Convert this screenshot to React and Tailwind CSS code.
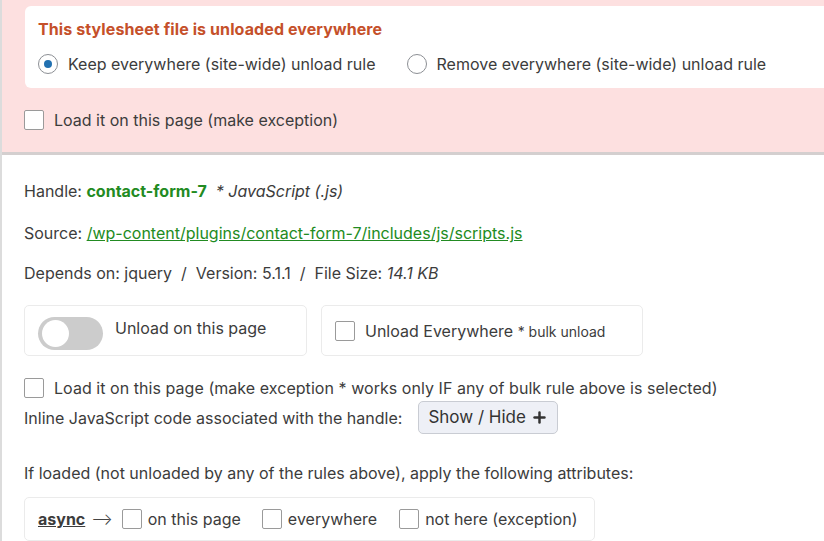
import { Plus } from 'lucide-react';

function Checkbox({ className = '' }) {
  return <span className={`inline-block w-[20px] h-[20px] border border-[#9a9a9a] bg-white rounded-[2px] shrink-0 ${className}`} />;
}

function Radio({ checked }) {
  return (
    <span className="inline-flex items-center justify-center w-[20px] h-[20px] rounded-full border border-[#8c8f94] bg-white shrink-0">
      {checked && <span className="w-[8px] h-[8px] rounded-full bg-[#2271b1]" />}
    </span>
  );
}

export default function App() {
  return (
    <div className="w-[824px] h-[541px] overflow-hidden bg-white text-[#3c3c3c] text-[16px] border-l-[2px] border-[#dcdcdc]" style={{ fontFamily: 'Inter, "Liberation Sans", Arial, sans-serif' }}>
      {/* Unloaded everywhere notice */}
      <div className="bg-[#fde0e0] pt-[6px] pb-[20px] border-b-[3px] border-[#d4cfcf]">
        <div className="ml-[23px] bg-white rounded-l-[6px] pl-[13px] pt-[11px] pb-[12px]">
          <div className="text-[#c5502a] font-bold text-[16px] leading-[24px] tracking-[0.1px]">This stylesheet file is unloaded everywhere</div>
          <div className="flex items-center mt-[11px] leading-[24px]">
            <label className="flex items-center gap-[10px]">
              <Radio checked />
              <span>Keep everywhere (site-wide) unload rule</span>
            </label>
            <label className="flex items-center gap-[10px] ml-[31px]">
              <Radio />
              <span>Remove everywhere (site-wide) unload rule</span>
            </label>
          </div>
        </div>
        <label className="flex items-center gap-[10px] ml-[22px] mt-[20px] leading-[24px]">
          <Checkbox />
          <span>Load it on this page (make exception)</span>
        </label>
      </div>

      {/* Handle details */}
      <div className="pl-[22px] pt-[24px]">
        <div className="leading-[24px]">
          Handle: <b className="text-[#228b22] font-bold">contact-form-7</b>&nbsp; <i>* JavaScript (.js)</i>
        </div>
        <div className="leading-[24px] mt-[18px]">
          Source: <a className="text-[#228b22] underline">/wp-content/plugins/contact-form-7/includes/js/scripts.js</a>
        </div>
        <div className="leading-[24px] mt-[16px]">
          Depends on: jquery &nbsp;/&nbsp; Version: 5.1.1 &nbsp;/&nbsp; File Size: <i>14.1 KB</i>
        </div>

        <div className="flex gap-[14px] mt-[20px]">
          <div className="w-[283px] h-[51px] border border-[#ebebeb] rounded-[5px] flex items-start pl-[13px] pt-[11px] gap-[12px]">
            <span className="w-[65px] h-[33px] rounded-full bg-[#cccccc] flex items-center pl-[4px] shrink-0">
              <span className="w-[27px] h-[27px] rounded-full bg-white" />
            </span>
            <span className="leading-[24px] -mt-[1px]">Unload on this page</span>
          </div>
          <div className="w-[322px] h-[51px] border border-[#ebebeb] rounded-[5px] flex items-center pl-[13px] gap-[10px]">
            <Checkbox />
            <span>Unload Everywhere <span className="text-[14px]">* bulk unload</span></span>
          </div>
        </div>

        <label className="flex items-center gap-[10px] mt-[20px] leading-[24px]">
          <Checkbox />
          <span className="tracking-[0.05px]">Load it on this page (make exception * works only IF any of bulk rule above is selected)</span>
        </label>
        <div className="flex items-center mt-[1px]">
          <span>Inline JavaScript code associated with the handle:</span>
          <button className="ml-[16px] h-[33px] px-[9px] border border-[#c9ccd3] bg-[#eef0f6] rounded-[5px] flex items-center gap-[5px] text-[17px] text-[#333]">
            Show / Hide <Plus size={17} strokeWidth={3.5} />
          </button>
        </div>

        <div className="leading-[24px] mt-[27px]">
          If loaded (not unloaded by any of the rules above), apply the following attributes:
        </div>
        <div className="mt-[12px] w-[571px] h-[44px] border border-[#ebebeb] rounded-[5px] flex items-center pl-[13px]">
          <b className="underline font-bold">async</b>
          <span className="ml-[6px] text-[16px] text-[#444] font-light">⟶</span>
          <Checkbox className="ml-[9px]" />
          <span className="ml-[6px]">on this page</span>
          <Checkbox className="ml-[21px]" />
          <span className="ml-[6px]">everywhere</span>
          <Checkbox className="ml-[22px]" />
          <span className="ml-[6px]">not here (exception)</span>
        </div>
      </div>
    </div>
  );
}
